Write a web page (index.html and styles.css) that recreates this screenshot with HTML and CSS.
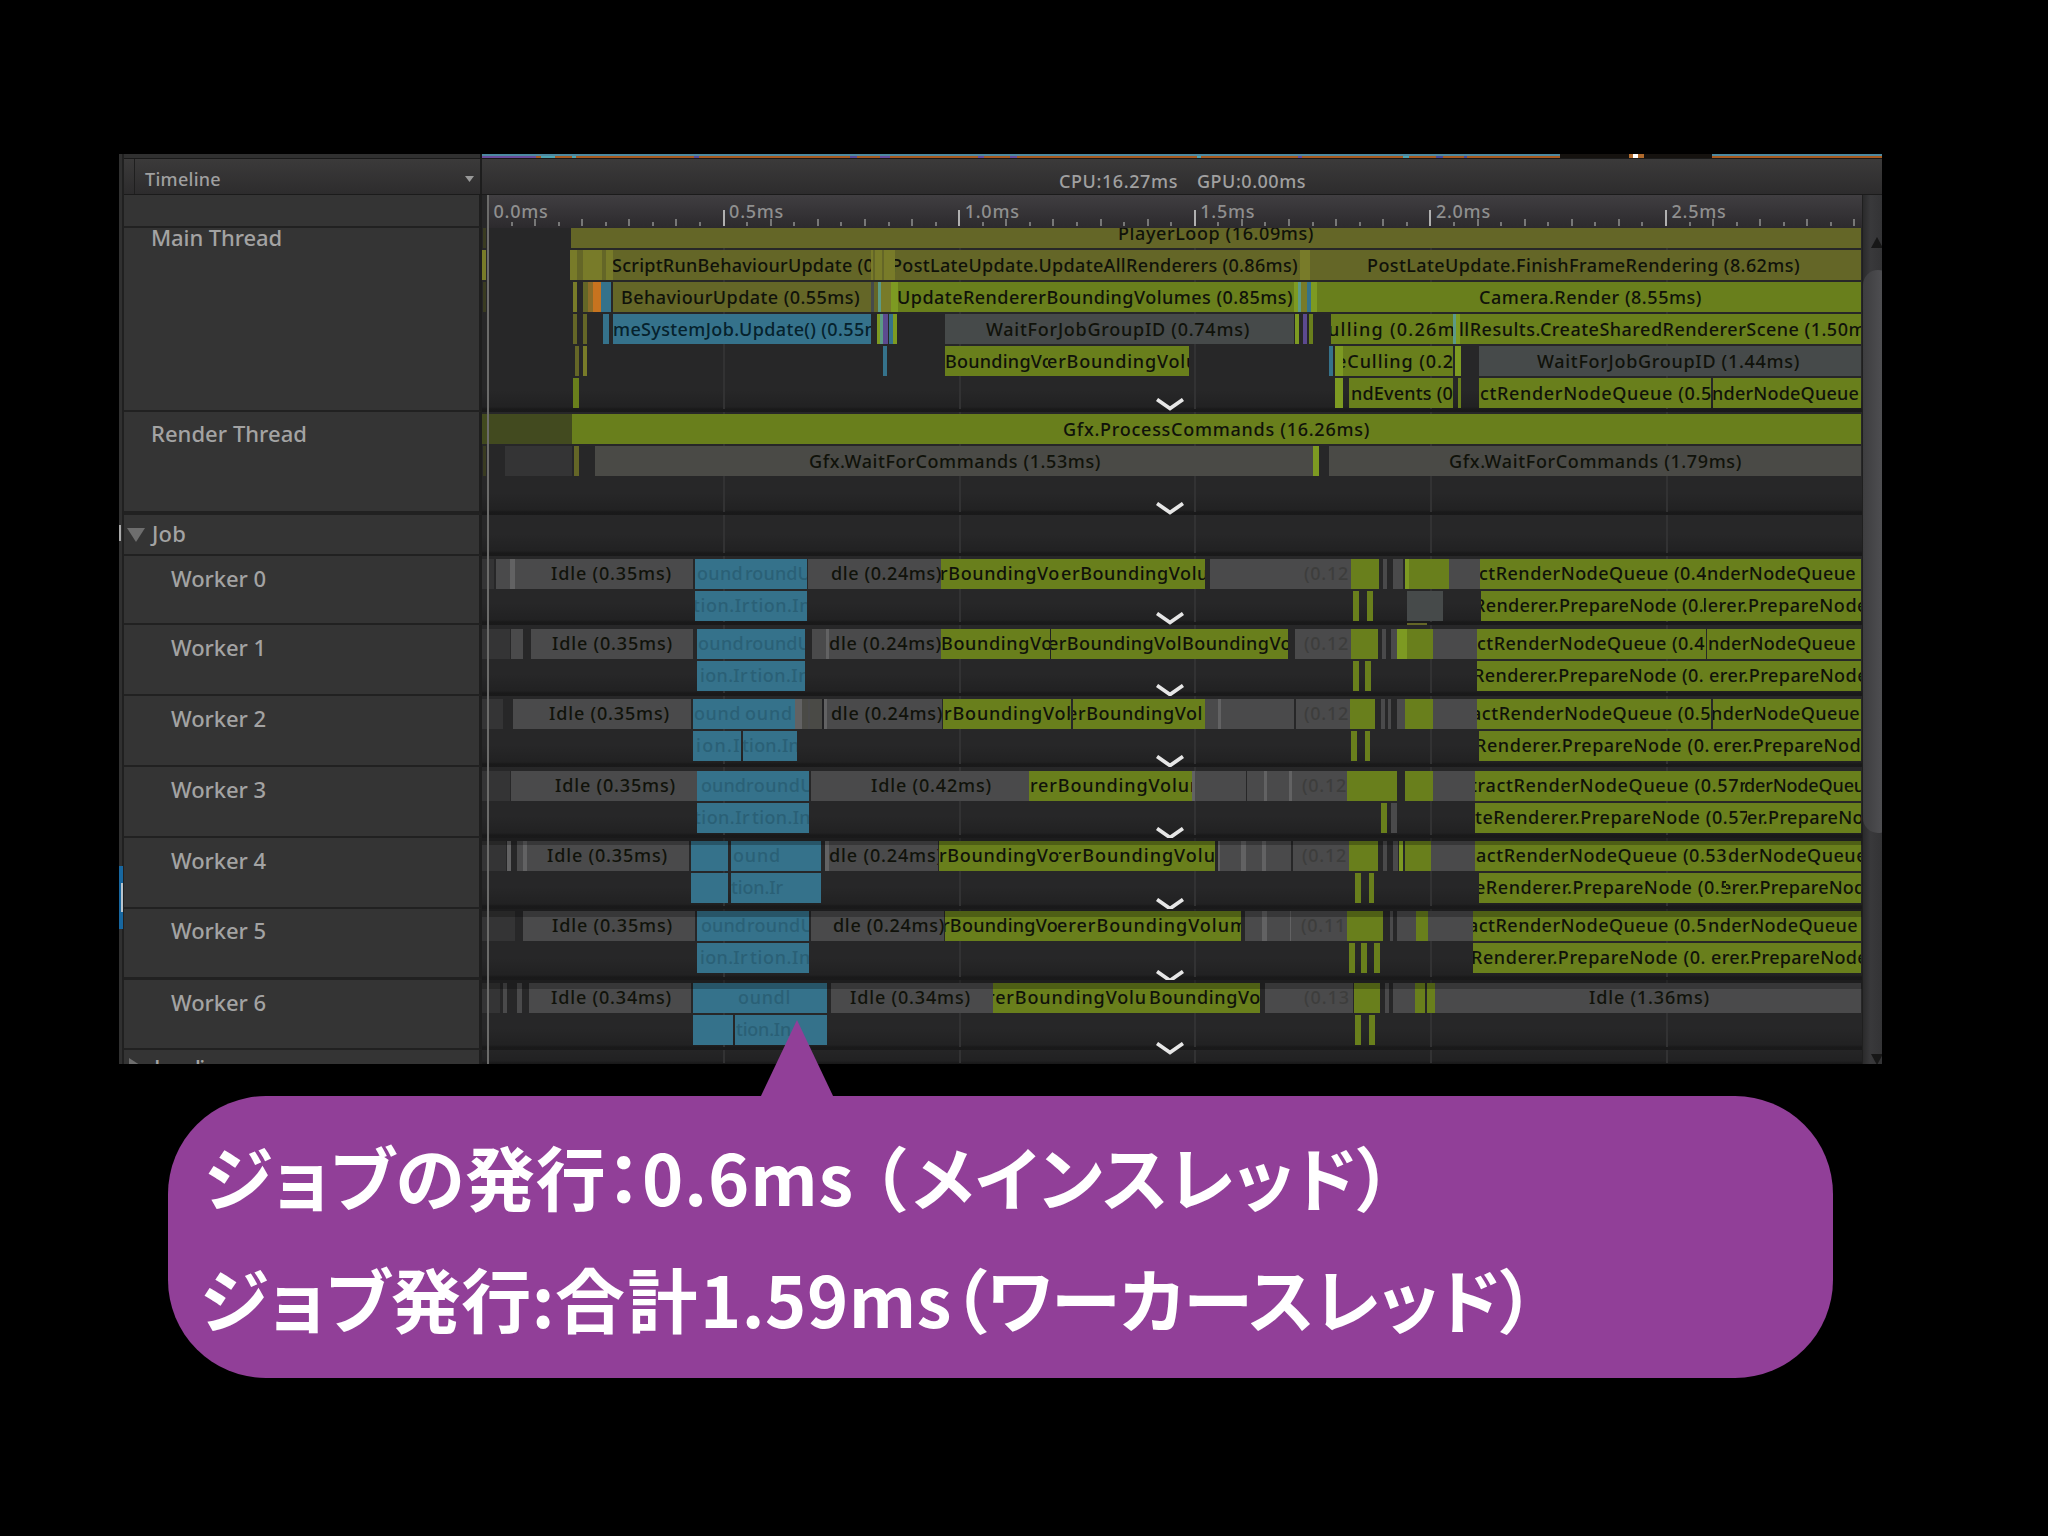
FILE: index.html
```html
<!DOCTYPE html>
<html lang="ja">
<head>
<meta charset="utf-8">
<title>Profiler Timeline</title>
<link rel="stylesheet" href="styles.css">
</head>
<body>
<main class="slide">
  <section class="profiler">
    <div class="edge"><i class="edge-tick"></i><i class="edge-select"></i></div>
    <div class="body">
      <div class="graph-strip"><span class="strip-side"></span><span class="strip-chart" id="strip"></span></div>
      <header class="toolbar">
        <div class="mode"><span class="fit" data-w="76">Timeline</span><svg width="9" height="6" viewBox="0 0 9 6"><path d="M0 0h9L4.5 6z" fill="#999"/></svg></div>
        <div class="stats"><span class="fit" data-w="119">CPU:16.27ms</span><span class="fit" data-w="109">GPU:0.00ms</span></div>
      </header>
      <div class="tracks">
        <div class="rows">
          <div class="row ruler-row"><div class="name"></div><div class="ruler" id="ruler"></div></div>
          <div class="row main"><div class="name"><span class="fit" data-w="131">Main Thread</span></div><div class="lane" data-lane="main"></div></div>
          <div class="row render"><div class="name"><span class="fit" data-w="156">Render Thread</span></div><div class="lane" data-lane="render"></div></div>
          <div class="row job"><div class="name group"><svg width="18" height="14" viewBox="0 0 18 14"><path d="M0 0h18L9 14z" fill="#6e6e6e"/></svg><span class="fit" data-w="34">Job</span></div><div class="lane" data-lane="job"></div></div>
          <div class="row w0"><div class="name worker"><span class="fit" data-w="95">Worker 0</span></div><div class="lane" data-lane="w0"></div></div>
          <div class="row w1"><div class="name worker"><span class="fit" data-w="95">Worker 1</span></div><div class="lane" data-lane="w1"></div></div>
          <div class="row w2"><div class="name worker"><span class="fit" data-w="95">Worker 2</span></div><div class="lane" data-lane="w2"></div></div>
          <div class="row w3"><div class="name worker"><span class="fit" data-w="95">Worker 3</span></div><div class="lane" data-lane="w3"></div></div>
          <div class="row w4"><div class="name worker"><span class="fit" data-w="95">Worker 4</span></div><div class="lane" data-lane="w4"></div></div>
          <div class="row w5"><div class="name worker"><span class="fit" data-w="95">Worker 5</span></div><div class="lane" data-lane="w5"></div></div>
          <div class="row w6"><div class="name worker"><span class="fit" data-w="95">Worker 6</span></div><div class="lane" data-lane="w6"></div></div>
          <div class="row loading"><div class="name group"><svg width="14" height="18" viewBox="0 0 14 18"><path d="M0 0v18L14 9z" fill="#6e6e6e"/></svg><span class="fit" data-w="74">Loading</span></div><div class="lane" data-lane="loading"></div></div>
          <div class="playhead"></div>
        </div>
        <div class="scrollbar">
          <svg class="arrow-up" width="12" height="11" viewBox="0 0 12 11"><path d="M6 0l6 11H0z" fill="#171717"/></svg>
          <div class="thumb"></div>
          <svg class="arrow-down" width="12" height="11" viewBox="0 0 12 11"><path d="M6 11l6-11H0z" fill="#171717"/></svg>
        </div>
      </div>
    </div>
  </section>
  <aside class="callout">
    <svg class="pointer" width="76" height="78" viewBox="0 0 76 78"><path d="M38 0L75 78H1z" fill="#913f98"/></svg>
    <p class="line first"><span class="fit" data-w="438">ジョブの発行：</span><span class="fit" data-w="229">0.6ms </span><span class="fit" data-w="41">（</span><span class="fit" data-w="481">メインスレッド）</span></p>
    <p class="line second"><span class="fit" data-w="355">ジョブ発行:</span><span class="fit" data-w="145">合計</span><span class="fit" data-w="252">1.59ms</span><span class="fit" data-w="583">（ワーカースレッド）</span></p>
  </aside>
</main>
<script src="timeline.js"></script>
</body>
</html>
```
FILE: styles.css
```css
* { box-sizing: border-box; }
body { margin: 0; background: #000; font-family: "Noto Sans", "Open Sans", sans-serif; }
.slide { width: 2048px; height: 1536px; padding: 154px 0 0 119px; overflow: hidden; background: #000; }
.fit { display: inline-block; white-space: pre; }

.profiler { display: flex; width: 1763px; height: 910px; background: #272728; overflow: hidden; color: #a3a3a3; }
.edge { width: 5px; flex: none; display: flex; flex-direction: column; background: linear-gradient(90deg, #303030 0 3px, #202020 3px); }
.edge-tick { width: 2px; height: 16px; margin-top: 371px; background: #aaa; }
.edge-select { width: 4px; height: 63px; margin-top: 325px; background: linear-gradient(90deg, transparent 2px, #b9c4cc 2px) 0 17px / 4px 29px no-repeat, #1767a0; }
.body { flex: 1; min-width: 0; display: flex; flex-direction: column; }

.graph-strip { display: flex; height: 5px; flex: none; border-bottom: 1px solid #191919; }
.strip-side { width: 358px; background: #303030; border-right: 2px solid #151515; }
.strip-chart { flex: 1; position: relative; overflow: hidden; background: linear-gradient(#4c89a0 0 2px, #a95b20 2px); }
.strip-chart i { position: absolute; top: 0; height: 4px; }

.toolbar { display: flex; height: 36px; flex: none; border-bottom: 1px solid #1b1b1b; background: linear-gradient(#3b3a3a, #2d2c2d); font-size: 18px; font-weight: 500; line-height: 24px; }
.mode { display: flex; align-items: center; justify-content: space-between; width: 348px; margin-left: 10px; padding: 5px 6px 0 10px; border-right: 2px solid #1d1d1d; border-left: 1px solid #1f1f1f; color: #a0a0a0; }
.stats { flex: 1; display: flex; align-items: center; gap: 19px; padding: 8px 0 0 577px; color: #a0a0a0; }

.tracks { flex: 1; min-height: 0; display: flex; }
.rows { position: relative; width: 1738px; flex: none; display: flex; flex-direction: column; overflow: hidden; }
.row { display: flex; flex: none; overflow: hidden; }
.name { width: 358px; flex: none; padding-left: 27px; background: #343434; border-right: 3px solid #1e1e1e; border-bottom: 2px solid #212121; font-size: 22px; font-weight: 500; line-height: 30px; }
.name.worker { padding: 7px 0 0 47px; }
.name.group { display: flex; gap: 7px; padding: 3px 0 0 3px; }
.name.group svg { margin-top: 10px; }
.lane { position: relative; flex: 1; overflow: hidden; background: linear-gradient(transparent calc(100% - 22px), rgba(0,0,0,.15) calc(100% - 5px), rgba(0,0,0,.35) calc(100% - 3px)), #272728; }
.ruler-row { height: 33px; }
.ruler { position: relative; flex: 1; margin-left: 5px; background: linear-gradient(#403e41, #2c2a2d); color: #8f8f8f; font-size: 18px; font-weight: 500; line-height: 24px; }
.ruler i { position: absolute; bottom: 2px; width: 2px; background: #777; }
.ruler i.major { background: #b0b0b0; }
.ruler span { position: absolute; top: 4px; }
.main { height: 184px; }
.main .name { line-height: 19px; }
.render { height: 103px; }
.render .name { padding-top: 6px; border-bottom-width: 4px; }
.job { height: 41px; }
.w0 { height: 69px; }
.w1, .w2, .w3, .w4, .w5 { height: 71px; }
.w1 .name.worker { padding-top: 7px; }
.w5 .name.worker { padding-top: 6px; border-bottom-width: 3px; }
.w6 { height: 70px; }
.w6, .w6 .lane { overflow: visible; }
.w6 .lane { z-index: 1; }
.loading { height: 16px; }
.loading .name.group { padding: 2px 0 0 5px; gap: 11px; }
.loading .name.group svg { margin-top: 6px; }

.grid-line { position: absolute; top: 0; bottom: 3px; width: 2px; background: #323233; }
.bar { position: absolute; height: 30px; overflow: hidden; }
.bar span { position: absolute; top: 1px; font-size: 18px; font-weight: 500; line-height: 26px; color: #10120a; white-space: pre; }
.main .bar span, .render .bar span { top: 2px; }
.bar span.faint { opacity: .22; }
.blue span { color: #06222d; }
.olive { background: #646627; }
.lime-olive { background: #787b29; }
.green { background: #697f1c; }
.lime { background: #7d9a22; }
.dark-green { background: #424a1f; }
.dark-olive { background: #393b21; }
.blue { background: #35728b; }
.teal { background: #5c9a86; }
.purple { background: #5c4a90; }
.brown { background: #8b6c28; }
.orange { background: #c7731f; }
.gray { background: #4a4a4b; }
.warm { background: #4a4a46; }
.cool { background: #464a4a; }
.light { background: #626263; }
.dim { background: #343435; }
.line { background: #202022; }
.shade { background: rgba(0,0,0,.25); }
.chevron { position: absolute; left: 674px; }
.chevron svg { display: block; }
.playhead { position: absolute; z-index: 2; left: 363px; top: 0; bottom: 0; width: 2px; background: #6b6b6a; }

.scrollbar { flex: 1; display: flex; flex-direction: column; background: linear-gradient(90deg, #2a2a2b, #39393b 40%, #333335); border-left: 1px solid #1f1f1f; overflow: hidden; }
.arrow-up { margin: 42px 0 0 8px; flex: none; }
.thumb { flex: none; width: 30px; height: 563px; margin-top: 22px; border-radius: 15px; background: linear-gradient(90deg, #3d3d3f, #4d4d50 60%); }
.arrow-down { margin: 221px 0 0 8px; flex: none; }

.callout { position: absolute; z-index: 3; left: 168px; top: 1096px; width: 1665px; height: 282px; border-radius: 98px; background: #913f98; color: #fff; font-family: "Noto Sans CJK JP", sans-serif; font-weight: 700; font-size: 70px; font-feature-settings: "palt"; }
.pointer { position: absolute; left: 591px; top: -76px; }
.callout .line { display: flex; margin: 0; background: none; height: 122px; line-height: 104px; white-space: pre; }
.callout .first { padding: 28px 0 0 36px; }
.callout .second { padding: 28px 0 0 32px; }
```
FILE: timeline.js
```js
// Lane data: [x1, x2, colour, [[text, start, end], ...]] for each call-stack level.
const ORIGIN = 482;
const END = 1861;
const HALF_MS = 235.6;
const ZERO = 488;

const idle = (a, b, t, s, e) => [a, b, 'gray', [[t, s, e]]];
const lanes = {
  main: { top: -10, chevron: 170, levels: [
    [[483, 486, 'dark-olive'], [571, END, 'olive', [['PlayerLoop (16.09ms)', 1118, 1314]]]],
    [[481, 486, 'lime-olive'], [570, 613, 'lime-olive'], [577, 583, 'olive'], [602, 606, 'olive'],
      [613, 871, 'olive', [['ScriptRunBehaviourUpdate (0', 612, 874]]], [871, 895, 'lime-olive'], [873, 875, 'olive'], [882, 884, 'olive'],
      [895, 1300, 'olive', [['PostLateUpdate.UpdateAllRenderers (0.86ms)', 891, 1298]]], [1300, 1310, 'lime-olive'],
      [1310, END, 'olive', [['PostLateUpdate.FinishFrameRendering (8.62ms)', 1367, 1800]]]],
    [[483, 486, 'dark-olive'], [573, 577, 'lime-olive'], [583, 588, 'olive'], [588, 593, 'brown'], [593, 601, 'orange'], [601, 611, 'blue'],
      [613, 871, 'olive', [['BehaviourUpdate (0.55ms)', 621, 860]]], [871, 874, 'cool'], [874, 878, 'olive'], [878, 881, 'teal'], [881, 891, 'lime-olive'], [891, 898, 'lime'],
      [898, 1294, 'green', [['UpdateRendererBoundingVolumes (0.85ms)', 897, 1293]]], [1294, 1298, 'lime'], [1298, 1301, 'teal'], [1301, 1307, 'lime-olive'], [1307, 1311, 'blue'], [1311, 1317, 'lime'],
      [1317, END, 'green', [['Camera.Render (8.55ms)', 1479, 1702]]]],
    [[573, 577, 'olive'], [583, 587, 'olive'], [603, 609, 'blue'], [613, 871, 'blue', [['meSystemJob.Update() (0.55m', 613, 882]]],
      [877, 880, 'lime'], [880, 883, 'teal'], [883, 888, 'purple'], [889, 893, 'blue'], [893, 897, 'lime'],
      [945, 1294, 'cool', [['WaitForJobGroupID (0.74ms)', 986, 1250]]], [1295, 1299, 'lime'], [1303, 1307, 'purple'], [1309, 1313, 'green'],
      [1331, 1453, 'green', [['ulling (0.26m', 1328, 1456]]], [1453, 1456, 'teal'], [1456, 1460, 'lime'],
      [1460, END, 'green', [['llResults.CreateSharedRendererScene (1.50m', 1459, 1866]]]],
    [[575, 579, 'olive'], [583, 587, 'lime-olive'], [883, 887, 'blue'],
      [945, 1048, 'green', [['BoundingVo', 945, 1053]]], [1048, 1189, 'green', [['erBoundingVolu', 1047, 1198]]],
      [1329, 1333, 'blue'], [1335, 1343, 'lime'], [1343, 1453, 'green', [['eCulling (0.2', 1336, 1454]]], [1455, 1461, 'lime'],
      [1479, END, 'cool', [['WaitForJobGroupID (1.44ms)', 1537, 1800]]]],
    [[573, 579, 'green'], [1335, 1343, 'lime'], [1349, 1453, 'green', [['ndEvents (0', 1351, 1453]]], [1458, 1461, 'green'],
      [1479, 1711, 'green', [['ctRenderNodeQueue (0.5', 1480, 1712]]], [1713, END, 'green', [['nderNodeQueue', 1712, 1859]]]],
  ]},
  render: { top: 2, chevron: 90, levels: [
    [[482, 572, 'dark-green'], [572, END, 'green', [['Gfx.ProcessCommands (16.26ms)', 1063, 1370]]]],
    [[483, 486, 'dark-olive'], [505, 572, 'dim'], [574, 579, 'olive'], [595, 1313, 'warm', [['Gfx.WaitForCommands (1.53ms)', 809, 1101]]], [1313, 1319, 'lime'],
      [1329, END, 'warm', [['Gfx.WaitForCommands (1.79ms)', 1449, 1742]]]],
  ]},
  job: { top: 0, levels: [] },
  w0: { top: 3, chevron: 56, levels: [
    [[482, 494, 'dim'], [496, 510, 'gray'], [510, 515, 'light'], idle(515, 693, 'Idle (0.35ms)', 551, 672),
      [695, 807, 'blue', [['ound', 697, 743, 1], ['roundU', 745, 811, 1]]], idle(808, 941, 'dle (0.24ms)', 831, 942),
      [941, 1061, 'green', [['rBoundingVo', 940, 1060]]], [1061, 1205, 'green', [['erBoundingVolu', 1061, 1209]]],
      [1210, 1351, 'gray', [['(0.12', 1304, 1349, 1]]], [1351, 1379, 'green'], [1383, 1387, 'gray'], [1393, 1403, 'gray'], [1405, 1409, 'lime'], [1409, 1449, 'green'], [1449, 1481, 'gray'],
      [1480, 1706, 'green', [['ctRenderNodeQueue (0.4', 1479, 1707]]], [1706, END, 'green', [['nderNodeQueue', 1707, 1856]]]],
    [[695, 807, 'blue', [['tion.Ir', 693, 750, 1], ['tion.In', 751, 811, 1]]], [1353, 1359, 'green'], [1367, 1373, 'green'], [1407, 1443, 'cool'],
      [1481, 1704, 'green', [['Renderer.PrepareNode (0.', 1474, 1704]]], [1704, END, 'green', [['derer.PrepareNode', 1696, 1868]]]],
    [[1407, 1427, 'olive', null, 2]],
  ]},
  w1: { top: 4, chevron: 59, levels: [
    [[482, 510, 'dim'], [511, 523, 'gray'], idle(531, 693, 'Idle (0.35ms)', 552, 673),
      [697, 805, 'blue', [['ound', 698, 744, 1], ['roundU', 745, 811, 1]]], [812, 826, 'gray'], [826, 830, 'light'], idle(829, 941, 'dle (0.24ms)', 829, 942),
      [941, 1050, 'green', [['BoundingVo', 941, 1053]]], [1051, 1181, 'green', [['erBoundingVol', 1048, 1182]]], [1181, 1288, 'green', [['BoundingVo', 1182, 1292]]], [1050, 1051, 'line'],
      [1295, 1351, 'gray', [['(0.12', 1304, 1349, 1]]], [1351, 1378, 'green'], [1382, 1386, 'gray'], [1391, 1397, 'gray'], [1397, 1407, 'lime'], [1407, 1433, 'green'], [1433, 1477, 'gray'],
      [1477, 1706, 'green', [['ctRenderNodeQueue (0.4', 1477, 1705]]], [1707, END, 'green', [['nderNodeQueue', 1708, 1856]]]],
    [[697, 805, 'blue', [['ion.Ir', 700, 748, 1], ['tion.In', 750, 810, 1]]], [1353, 1359, 'green'], [1365, 1371, 'green'],
      [1477, END, 'green', [['Renderer.PrepareNode (0.', 1473, 1704], ['erer.PrepareNode', 1709, 1868]]]],
  ]},
  w2: { top: 3, chevron: 59, levels: [
    [[482, 503, 'dim'], idle(513, 691, 'Idle (0.35ms)', 549, 670),
      [693, 795, 'blue', [['ound', 694, 741, 1], ['ound', 745, 793, 1]]], [795, 802, 'light'], [802, 822, 'warm'], [808, 810, 'gray'], [822, 824, 'line'], [824, 827, 'light'], idle(827, 942, 'dle (0.24ms)', 831, 943),
      [943, 1071, 'green', [['rBoundingVol', 944, 1072]]], [1073, 1205, 'green', [['erBoundingVol', 1067, 1203]]],
      [1205, 1294, 'gray'], [1218, 1221, 'light'], [1296, 1350, 'gray', [['(0.12', 1304, 1349, 1]]], [1350, 1375, 'green'], [1381, 1385, 'gray'], [1388, 1391, 'gray'], [1397, 1405, 'gray'], [1405, 1433, 'green'], [1433, 1477, 'gray'],
      [1477, 1711, 'green', [['actRenderNodeQueue (0.5', 1471, 1711]]], [1713, END, 'green', [['nderNodeQueue', 1711, 1860]]]],
    [[693, 741, 'blue', [['ion.I', 696, 741, 1]]], [743, 797, 'blue', [['tion.In', 742, 800, 1]]], [1351, 1357, 'green'], [1365, 1370, 'green'],
      [1479, 1711, 'green', [['Renderer.PrepareNode (0.', 1475, 1710]]], [1711, END, 'green', [['erer.PrepareNod', 1713, 1861]]]],
  ]},
  w3: { top: 4, chevron: 60, levels: [
    [[482, 510, 'dim'], idle(511, 697, 'Idle (0.35ms)', 555, 676),
      [697, 809, 'blue', [['ound', 701, 746, 1], ['roundU', 746, 814, 1]]], idle(811, 1029, 'Idle (0.42ms)', 871, 992),
      [1029, 1192, 'green', [['rerBoundingVolun', 1030, 1202]]], [1192, 1246, 'gray'], [1192, 1195, 'light'], [1247, 1347, 'gray', [['(0.12', 1302, 1347, 1]]], [1264, 1267, 'light'], [1289, 1292, 'light'],
      [1347, 1397, 'green'], [1405, 1433, 'green'], [1433, 1475, 'gray'],
      [1475, 1746, 'green', [['tractRenderNodeQueue (0.57m', 1470, 1757]]], [1745, END, 'green', [['derNodeQueu', 1744, 1865]]]],
    [[697, 809, 'blue', [['tion.Ir', 694, 750, 1], ['tion.In', 752, 811, 1]]], [1381, 1387, 'green'], [1391, 1397, 'gray'],
      [1475, 1747, 'green', [['teRenderer.PrepareNode (0.57', 1475, 1750]]], [1747, END, 'green', [['er.PrepareNo', 1747, 1864]]]],
  ]},
  w4: { top: 3, chevron: 60, shade: 4, levels: [
    [[482, 506, 'dim'], [507, 511, 'light'], [517, 523, 'gray'], [523, 527, 'light'], idle(527, 689, 'Idle (0.35ms)', 547, 668),
      [691, 728, 'blue'], [731, 821, 'blue', [['ound', 733, 781, 1]]], [825, 829, 'light'], idle(829, 938, 'dle (0.24ms)', 829, 943),
      [939, 1060, 'green', [['rBoundingVo', 939, 1060]]], [1059, 1215, 'green', [['rerBoundingVolu', 1054, 1216]]],
      [1218, 1291, 'gray'], [1218, 1220, 'light'], [1241, 1246, 'light'], [1262, 1266, 'light'], [1293, 1349, 'gray', [['(0.12', 1302, 1347, 1]]], [1349, 1378, 'green'], [1383, 1387, 'gray'], [1393, 1398, 'gray'], [1399, 1403, 'lime'], [1405, 1431, 'green'], [1431, 1475, 'gray'],
      [1475, 1727, 'green', [['actRenderNodeQueue (0.53', 1476, 1727]]], [1727, END, 'green', [['derNodeQueue', 1728, 1867]]]],
    [[691, 728, 'blue'], [731, 821, 'blue', [['tion.Ir', 731, 783, 1]]], [1355, 1361, 'green'], [1369, 1374, 'green'],
      [1479, 1727, 'green', [['eRenderer.PrepareNode (0.5', 1475, 1731]]], [1726, END, 'green', [['erer.PrepareNode', 1721, 1876]]]],
  ]},
  w5: { top: 2, chevron: 61, shade: 6, levels: [
    [[482, 515, 'dim'], idle(523, 695, 'Idle (0.35ms)', 552, 673),
      [697, 809, 'blue', [['ound', 701, 746, 1], ['roundU', 747, 814, 1]]], idle(811, 944, 'dle (0.24ms)', 833, 945),
      [945, 1241, 'green', [['rBoundingVo', 942, 1058], ['ererBoundingVolum', 1057, 1248]]],
      [1245, 1347, 'gray', [['(0.11', 1301, 1346, 1]]], [1262, 1267, 'light'], [1290, 1291, 'light'], [1347, 1383, 'green'], [1390, 1393, 'gray'], [1397, 1416, 'gray'], [1416, 1428, 'green'], [1428, 1473, 'gray'],
      [1473, 1707, 'green', [['actRenderNodeQueue (0.5', 1468, 1707]]], [1707, END, 'green', [['nderNodeQueue', 1708, 1858]]]],
    [[697, 809, 'blue', [['ion.Ir', 700, 748, 1], ['tion.In', 750, 811, 1]]], [1349, 1355, 'green'], [1361, 1367, 'green'], [1374, 1380, 'green'],
      [1473, END, 'green', [['Renderer.PrepareNode (0.', 1471, 1706], ['erer.PrepareNode', 1711, 1868]]]],
  ]},
  w6: { top: 3, chevron: 62, shade: 6, levels: [
    [[482, 500, 'dim'], [503, 507, 'gray'], [517, 522, 'gray'], idle(529, 691, 'Idle (0.34ms)', 551, 672),
      [693, 827, 'blue', [['oundl', 738, 791, 1]]], idle(831, 993, 'Idle (0.34ms)', 850, 971),
      [993, 1149, 'green', [['rerBoundingVolu', 987, 1147]]], [1149, 1260, 'green', [['BoundingVo', 1149, 1261]]],
      [1265, 1353, 'gray', [['(0.13', 1304, 1350, 1]]], [1354, 1380, 'green'], [1385, 1389, 'gray'], [1393, 1415, 'gray'], [1415, 1425, 'green'], [1427, 1435, 'green'],
      idle(1435, END, 'Idle (1.36ms)', 1589, 1710)],
    [[693, 733, 'blue'], [735, 827, 'blue', [['tion.In', 736, 791, 1]]], [1355, 1361, 'green'], [1369, 1375, 'green']],
  ]},
  loading: { top: 0, levels: [] },
};

function add(parent, tag, cls, style) {
  const el = document.createElement(tag);
  if (cls) el.className = cls;
  Object.assign(el.style, style);
  parent.appendChild(el);
  return el;
}

// Spread a label over the given width by its letter spacing.
function fit(el, width) {
  const natural = el.getBoundingClientRect().width;
  el.style.letterSpacing = (width - natural) / el.textContent.length + 'px';
}

document.querySelectorAll('.lane').forEach(lane => {
  const data = lanes[lane.dataset.lane];
  for (let i = 1; i <= 5; i++) add(lane, 'i', 'grid-line', { left: ZERO + i * HALF_MS - ORIGIN - 0.5 + 'px' });
  data.levels.forEach((bars, level) => bars.forEach(([a, b, colour, labels, h]) => {
    const bar = add(lane, 'div', 'bar ' + colour, { left: a - ORIGIN + 'px', width: b - a + 'px', top: data.top + level * 32 + 'px' });
    if (h) bar.style.height = h + 'px';
    (labels || []).forEach(([text, s, e, faint]) => {
      const label = add(bar, 'span', faint ? 'faint' : '', { left: s - a + 'px' });
      label.textContent = text;
      fit(label, e - s);
    });
  }));
  if (data.shade) add(lane, 'div', 'bar shade', { left: 0, right: 0, top: 0, height: data.shade + data.top + 'px' });
  if (data.chevron) {
    const box = add(lane, 'div', 'chevron', { top: data.chevron + 'px' });
    box.innerHTML = '<svg width="28" height="14" viewBox="0 0 28 14"><path d="M1 1.500L14 10.500L27 1.500" fill="none" stroke="#e6e6e6" stroke-width="3.8"/></svg>';
  }
});

const ruler = document.getElementById('ruler');
for (let i = 1; i <= 58; i++) {
  const major = i % 10 === 0;
  add(ruler, 'i', major ? 'major' : '', { left: i * HALF_MS / 10 + 'px', height: (major ? 16 : i % 2 ? 4 : 7) + 'px' });
}
['0.0ms', '0.5ms', '1.0ms', '1.5ms', '2.0ms', '2.5ms'].forEach((t, i) => {
  const label = add(ruler, 'span', '', { left: i * HALF_MS + 6.5 + 'px' });
  label.textContent = t;
  fit(label, 55);
});

const strip = document.getElementById('strip');
[[482, 536, '#6a4d9c'], [541, 555, '#4fa3b0'], [572, 576, '#4fa3b0'], [694, 699, '#5a4a98'], [850, 857, '#5a4a98'], [880, 890, '#6a4d9c'], [978, 984, '#6a4d9c'], [1010, 1017, '#6a4d9c'], [1197, 1201, '#4fa3b0'], [1403, 1409, '#4fa3b0'], [1436, 1443, '#4a4a98'], [1464, 1467, '#4a4a98'], [1298, 1302, '#6a4d9c']]
  .forEach(([a, b, c]) => add(strip, 'i', '', { left: a - ORIGIN + 'px', width: b - a + 'px', top: '2px', background: c }));
add(strip, 'i', '', { left: 1560 - ORIGIN + 'px', width: '152px', background: '#15120f' });
add(strip, 'i', '', { left: 1629 - ORIGIN + 'px', width: '15px', background: '#b06a2c' });
add(strip, 'i', '', { left: 1633 - ORIGIN + 'px', width: '5px', background: '#fff' });

document.querySelectorAll('.fit').forEach(el => fit(el, +el.dataset.w));
```
